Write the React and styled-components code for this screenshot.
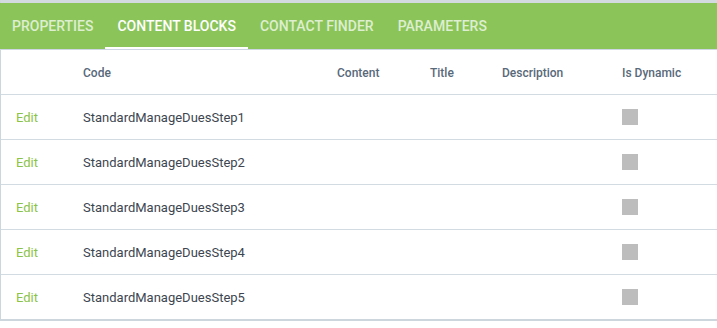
import React from 'react';
import styled, { createGlobalStyle } from 'styled-components';

const GlobalStyle = createGlobalStyle`
  html, body {
    margin: 0;
    padding: 0;
    background: #ffffff;
    font-family: Roboto, "Liberation Sans", Arial, sans-serif;
  }
`;

const Panel = styled.div`
  width: 717px;
  border-top: 3px solid #d3dbe1;
  border-left: 1px solid #ccd6dd;
  box-sizing: border-box;
  background: #fff;
`;

const TabBar = styled.div`
  display: flex;
  height: 46px;
  margin-left: -1px;
  background-color: #8bc55a;
  border-bottom: 1px solid #cfd6e3;
`;

const Tab = styled.div`
  display: flex;
  align-items: center;
  padding: 0 12px;
  font-size: 14px;
  font-weight: 500;
  text-transform: uppercase;
  color: ${({ active }) => (active ? '#ffffff' : 'rgba(255, 255, 255, 0.72)')};
  box-shadow: ${({ active }) => (active ? 'inset 0 -2px 0 #ffffff' : 'none')};
  cursor: pointer;
`;

const Row = styled.div`
  display: grid;
  grid-template-columns: 82px 254px 93px 72px 120px 1fr;
  align-items: center;
  height: ${({ head }) => (head ? '44px' : '44px')};
  border-bottom: 1px solid #d2dbe2;

  &:last-child {
    border-bottom: 2px solid #cdd6dd;
  }
`;

const HeadCell = styled.div`
  font-size: 12px;
  font-weight: 500;
  color: #58697a;
  padding-top: 1px;
`;

const Cell = styled.div`
  font-size: 13px;
  color: #3d4650;
`;

const EditLink = styled.a`
  padding-left: 15px;
  font-size: 13px;
  color: #8bc34a;
  text-decoration: none;
`;

const Check = styled.span`
  display: block;
  width: 16px;
  height: 16px;
  background: #bdbdbd;
`;

const tabs = ['Properties', 'Content Blocks', 'Contact Finder', 'Parameters'];
const rows = [1, 2, 3, 4, 5].map((n) => `StandardManageDuesStep${n}`);

const App = () => {
  return (
    <>
      <GlobalStyle />
      <Panel>
        <TabBar>
          {tabs.map((t) => (
            <Tab key={t} active={t === 'Content Blocks'}>
              {t}
            </Tab>
          ))}
        </TabBar>
        <Row head>
          <HeadCell />
          <HeadCell>Code</HeadCell>
          <HeadCell>Content</HeadCell>
          <HeadCell>Title</HeadCell>
          <HeadCell>Description</HeadCell>
          <HeadCell>Is Dynamic</HeadCell>
        </Row>
        {rows.map((code) => (
          <Row key={code}>
            <EditLink href="#">Edit</EditLink>
            <Cell>{code}</Cell>
            <Cell />
            <Cell />
            <Cell />
            <Cell>
              <Check />
            </Cell>
          </Row>
        ))}
      </Panel>
    </>
  );
};

export default App;
